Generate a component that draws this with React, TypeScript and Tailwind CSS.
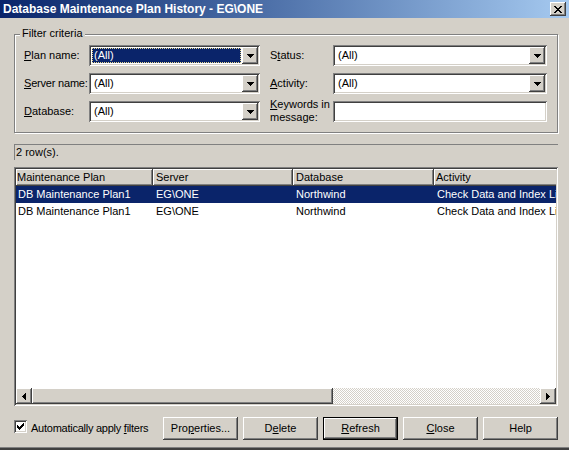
import React from 'react';

// classic 3D edges
const raised =
  'shadow-[inset_-1px_-1px_#404040,inset_1px_1px_#ffffff,inset_-2px_-2px_#808080,inset_2px_2px_#d4d0c8]';
const sunken =
  'shadow-[inset_1px_1px_#808080,inset_-1px_-1px_#ffffff,inset_2px_2px_#404040,inset_-2px_-2px_#d4d0c8]';

const DownArrow = () => (
  <svg width="7" height="4" viewBox="0 0 7 4" shapeRendering="crispEdges">
    <path d="M0 0h7v1H0zM1 1h5v1H1zM2 2h3v1H2zM3 3h1v1H3z" fill="#000" />
  </svg>
);

const LeftArrow = () => (
  <svg width="4" height="7" viewBox="0 0 4 7" shapeRendering="crispEdges">
    <path d="M3 0h1v7H3zM2 1h1v5H2zM1 2h1v3H1zM0 3h1v1H0z" fill="#000" />
  </svg>
);

const RightArrow = () => (
  <svg width="4" height="7" viewBox="0 0 4 7" shapeRendering="crispEdges">
    <path d="M0 0h1v7H0zM1 1h1v5H1zM2 2h1v3H2zM3 3h1v1H3z" fill="#000" />
  </svg>
);

const CloseGlyph = () => (
  <svg width="8" height="7" viewBox="0 0 8 7" shapeRendering="crispEdges">
    <path
      d="M0 0h2v1H0zM6 0h2v1H6zM1 1h2v1H1zM5 1h2v1H5zM2 2h4v1H2zM3 3h2v1H3zM2 4h4v1H2zM1 5h2v1H1zM5 5h2v1H5zM0 6h2v1H0zM6 6h2v1H6z"
      fill="#000"
    />
  </svg>
);

const U: React.FC<{ children: React.ReactNode }> = ({ children }) => (
  <span className="underline underline-offset-[1px]">{children}</span>
);

const Combo: React.FC<{ width: string; focused?: boolean }> = ({ width, focused }) => (
  <div className={`flex h-[21px] p-[2px] bg-white ${width} ${sunken}`}>
    <div className="flex-1 flex p-[1px]">
      {focused ? (
        <div className="flex-1 flex items-center pl-[1px] bg-[#0a246a] text-white border border-dotted border-[#e8d890]">
          (All)
        </div>
      ) : (
        <div className="flex-1 flex items-center pl-[2px]">(All)</div>
      )}
    </div>
    <div className={`w-[16px] flex items-center justify-center bg-[#d4d0c8] ${raised}`}>
      <DownArrow />
    </div>
  </div>
);

const TitleBar: React.FC = () => (
  <div className="h-[18px] flex items-center justify-between pl-[3px] pr-[3px] bg-linear-to-r from-[#0a246a] to-[#a6caf0]">
    <span className="text-white font-bold text-[12px] leading-[14px] whitespace-nowrap">
      Database Maintenance Plan History - EG\ONE
    </span>
    <div className={`w-[16px] h-[14px] flex items-center justify-center bg-[#d4d0c8] pt-[1px] ${raised}`}>
      <CloseGlyph />
    </div>
  </div>
);

const FilterGroup: React.FC = () => (
  <div className="relative h-[99px] border border-[#808080] shadow-[inset_1px_1px_#ffffff,1px_1px_#ffffff] pt-[10px] pl-[9px]">
    <span className="absolute left-[5px] top-[-8px] px-[2px] bg-[#d4d0c8] leading-[13px]">Filter criteria</span>
    <div className="flex flex-col gap-[7px]">
      <div className="flex h-[21px] items-center">
        <span className="w-[65px]"><U>P</U>lan name:</span>
        <Combo width="w-[171px]" focused />
        <span className="w-[63px] ml-[10px]">S<U>t</U>atus:</span>
        <Combo width="w-[214px]" />
      </div>
      <div className="flex h-[21px] items-center">
        <span className="w-[65px] whitespace-nowrap tracking-[-0.2px]"><U>S</U>erver name:</span>
        <Combo width="w-[171px]" />
        <span className="w-[63px] ml-[10px]"><U>A</U>ctivity:</span>
        <Combo width="w-[214px]" />
      </div>
      <div className="flex h-[21px] items-center">
        <span className="w-[65px]"><U>D</U>atabase:</span>
        <Combo width="w-[171px]" />
        <span className="w-[63px] ml-[10px] self-start -mt-[3px] leading-[13px]">
          <U>K</U>eywords in
          <br />
          message:
        </span>
        <div className={`w-[214px] h-[21px] bg-white ${sunken}`} />
      </div>
    </div>
  </div>
);

const columns = [
  { name: 'Maintenance Plan', width: 'w-[137px]', pad: 'pl-[1px]' },
  { name: 'Server', width: 'w-[140px]', pad: 'pl-[3px]' },
  { name: 'Database', width: 'w-[141px]', pad: 'pl-[3px]' },
  { name: 'Activity', width: 'w-[140px]', pad: 'pl-[2px]' },
];

const rows = [
  ['DB Maintenance Plan1', 'EG\\ONE', 'Northwind', 'Check Data and Index Li...'],
  ['DB Maintenance Plan1', 'EG\\ONE', 'Northwind', 'Check Data and Index Li...'],
];

const ListView: React.FC = () => (
  <div className={`mt-[7px] h-[239px] p-[2px] bg-white flex flex-col ${sunken}`}>
    <div className="flex-1 flex flex-col overflow-hidden">
      <div className="flex h-[17px] shrink-0">
        {columns.map(col => (
          <div
            key={col.name}
            className={`${col.width} shrink-0 flex items-center bg-[#d4d0c8] whitespace-nowrap ${col.pad} ${raised}`}
          >
            {col.name}
          </div>
        ))}
      </div>
      {rows.map((row, i) => (
        <div
          key={i}
          className={`flex h-[17px] shrink-0 w-[558px] ${i === 0 ? 'bg-[#0a246a] text-white' : ''}`}
        >
          {row.map((cell, j) => (
            <div
              key={j}
              className={`${columns[j].width} shrink-0 flex items-center overflow-hidden whitespace-nowrap ${
                j === 0 ? 'pl-[2px]' : 'pl-[3px]'
              }`}
            >
              {cell}
            </div>
          ))}
        </div>
      ))}
    </div>
    <div className="h-[16px] flex shrink-0">
      <div className={`w-[16px] flex items-center justify-center bg-[#d4d0c8] ${raised}`}>
        <LeftArrow />
      </div>
      <div className={`w-[301px] bg-[#d4d0c8] ${raised}`} />
      <div className="flex-1 bg-[repeating-conic-gradient(#d4d0c8_0_25%,#ffffff_0_50%)] bg-size-[2px_2px]" />
      <div className={`w-[16px] flex items-center justify-center bg-[#d4d0c8] ${raised}`}>
        <RightArrow />
      </div>
    </div>
  </div>
);

const Button: React.FC<{ children: React.ReactNode; isDefault?: boolean }> = ({ children, isDefault }) =>
  isDefault ? (
    <div className="w-[75px] h-[23px] border border-black">
      <div className={`w-full h-full flex items-center justify-center bg-[#d4d0c8] ${raised}`}>{children}</div>
    </div>
  ) : (
    <div className={`w-[75px] h-[23px] flex items-center justify-center bg-[#d4d0c8] ${raised}`}>{children}</div>
  );

const Footer: React.FC = () => (
  <div className="mt-[11px] h-[23px] flex items-start">
    <div className={`mt-[3px] w-[13px] h-[13px] bg-white flex items-center justify-center ${sunken}`}>
      <svg width="7" height="7" viewBox="0 0 7 7" shapeRendering="crispEdges">
        <path d="M6 0h1v3H6zM5 1h1v3H5zM4 2h1v3H4zM3 3h1v3H3zM2 4h1v3H2zM1 3h1v3H1zM0 2h1v3H0z" fill="#000" />
      </svg>
    </div>
    <span className="ml-[4px] h-[23px] flex items-center whitespace-nowrap tracking-[-0.25px]">
      Automatically apply&nbsp;<U>f</U>ilters
    </span>
    <div className="ml-auto flex gap-[5px]">
      <Button>
        Pro<U>p</U>erties...
      </Button>
      <Button>
        D<U>e</U>lete
      </Button>
      <Button isDefault>
        <U>R</U>efresh
      </Button>
      <Button>
        <U>C</U>lose
      </Button>
      <Button>Help</Button>
    </div>
  </div>
);

export default function App() {
  return (
    <div className="w-[569px] h-[450px] overflow-hidden bg-[#d4d0c8] flex flex-col font-['Liberation_Sans',Arial,sans-serif] text-[11px] leading-[13px] text-black shadow-[inset_0_-2px_#404040,inset_0_-3px_#808080]">
      <TitleBar />
      <div className="flex flex-col pl-[14px] pr-[11px] pt-[16px]">
        <FilterGroup />
        <div className="mt-[11px] h-[16px] flex items-center pl-[1px] border-t border-l border-[#808080] border-b-white border-r-white">
          2 row(s).
        </div>
        <ListView />
        <Footer />
      </div>
    </div>
  );
}
